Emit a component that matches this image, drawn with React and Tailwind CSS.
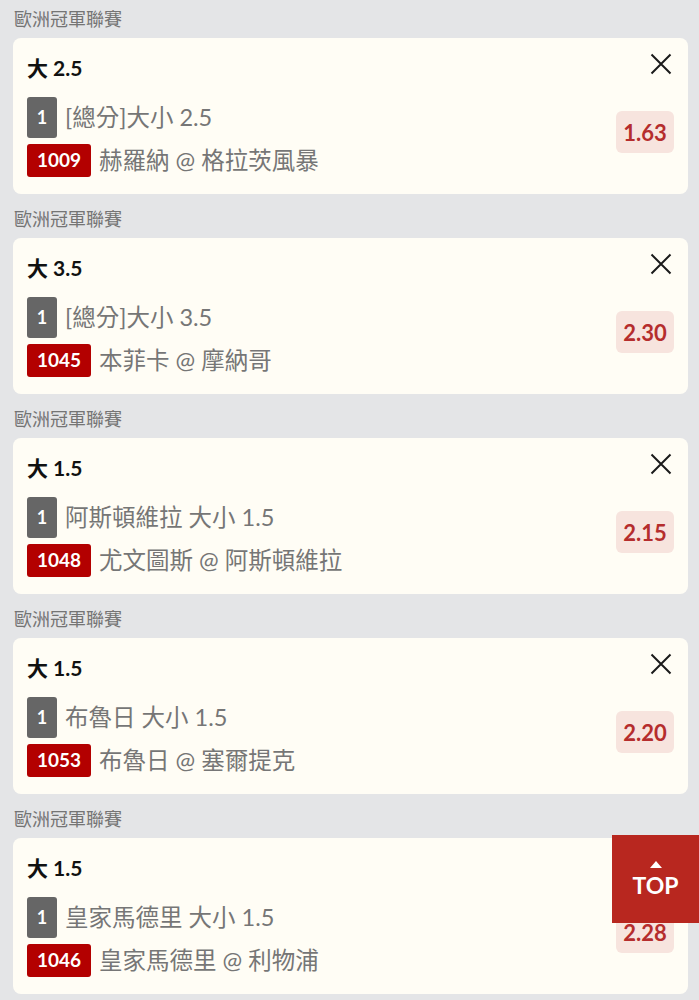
import React from 'react';

const bets = [
  { title: '大 2.5', market: '[總分]大小 2.5', code: '1009', match: '赫羅納 @ 格拉茨風暴', odds: '1.63' },
  { title: '大 3.5', market: '[總分]大小 3.5', code: '1045', match: '本菲卡 @ 摩納哥', odds: '2.30' },
  { title: '大 1.5', market: '阿斯頓維拉 大小 1.5', code: '1048', match: '尤文圖斯 @ 阿斯頓維拉', odds: '2.15' },
  { title: '大 1.5', market: '布魯日 大小 1.5', code: '1053', match: '布魯日 @ 塞爾提克', odds: '2.20' },
  { title: '大 1.5', market: '皇家馬德里 大小 1.5', code: '1046', match: '皇家馬德里 @ 利物浦', odds: '2.28' },
];

const CloseIcon = () => (
  <svg width="22" height="22" viewBox="0 0 22 22" className="text-[#1a1a1a]">
    <path d="M1.5 1.5 L20.5 20.5 M20.5 1.5 L1.5 20.5" stroke="currentColor" strokeWidth="2" fill="none" />
  </svg>
);

const BetCard = ({ bet }) => (
  <div className="ml-[13px] mr-[11px] mb-[6px] rounded-lg bg-[#fffdf5] flex pl-[14px] pr-[14px] pt-[14px] pb-[17px]">
    <div className="flex-1">
      <div className="h-[32px] flex items-center text-[21px] font-bold text-[#111]">{bet.title}</div>
      <div className="mt-[13px] h-[41px] flex items-center">
        <span className="w-[30px] h-[41px] rounded-[3px] bg-[#666666] text-white font-bold text-[18px] flex items-center justify-center">1</span>
        <span className="ml-[8px] text-[23.5px] text-[#767676]">{bet.market}</span>
      </div>
      <div className="mt-[6px] h-[33px] flex items-center">
        <span className="h-[33px] px-[10px] rounded-[3px] bg-[#b30000] text-white font-bold text-[19px] flex items-center">{bet.code}</span>
        <span className="ml-[8px] text-[23.5px] text-[#767676]">{bet.match}</span>
      </div>
    </div>
    <div className="flex flex-col items-end">
      <div className="mt-[1px] mr-[2px]">
        <CloseIcon />
      </div>
      <div className="mt-[36px] w-[58px] h-[42px] rounded-md bg-[#f7e4de] text-[#b52d2d] font-bold text-[22px] flex items-center justify-center">
        {bet.odds}
      </div>
    </div>
  </div>
);

export default function App() {
  return (
    <div className="min-h-screen bg-[#e4e5e7] font-['Lato','Noto_Sans_CJK_TC',sans-serif]">
      {bets.map((bet, i) => (
        <div key={i}>
          <div className="h-[38px] flex items-center pl-[14px] text-[18px] text-[#747474]">歐洲冠軍聯賽</div>
          <BetCard bet={bet} />
        </div>
      ))}

      {/* back to top */}
      <div className="fixed right-0 top-[835px] w-[87px] h-[88px] bg-[#b8271f] flex flex-col items-center justify-center text-white">
        <svg width="12" height="7" viewBox="0 0 12 7" className="mb-[6px]">
          <path d="M6 0 L12 7 L0 7 Z" fill="currentColor" />
        </svg>
        <span className="text-[23px] font-bold leading-none">TOP</span>
      </div>
    </div>
  );
}
